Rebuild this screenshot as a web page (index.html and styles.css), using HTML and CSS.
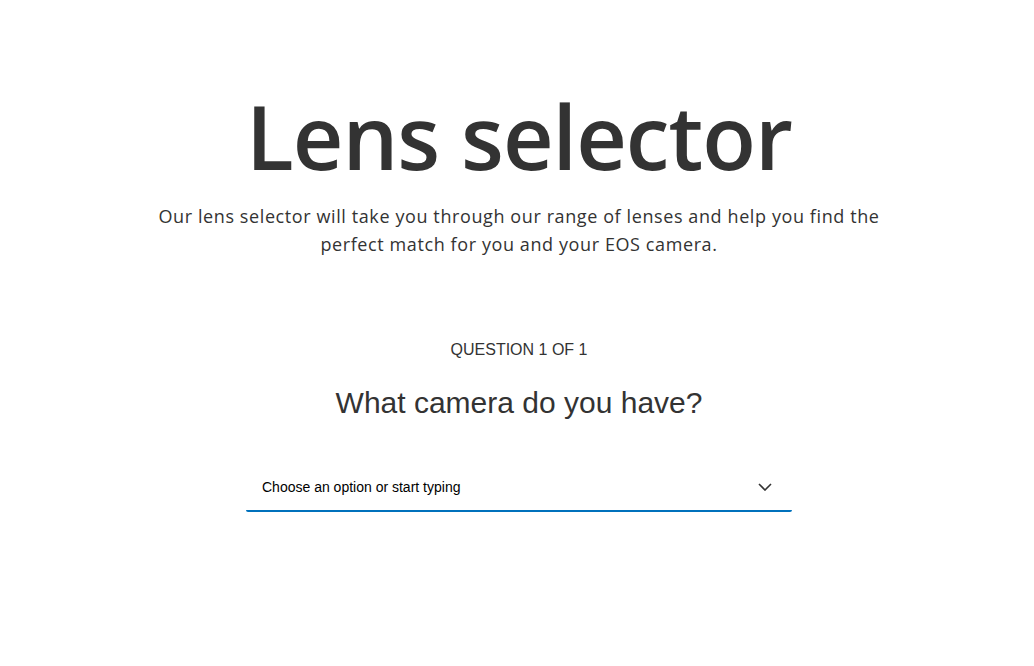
FILE: index.html
```html
<!DOCTYPE html>
<html lang="en">
<head>
<meta charset="utf-8">
<title>Lens selector</title>
<link rel="stylesheet" href="styles.css">
</head>
<body>
<main class="page">
  <header class="hero">
    <h1 class="title">Lens selector</h1>
    <p class="intro">Our lens selector will take you through our range of lenses and help you find the perfect match for you and your EOS camera.</p>
  </header>
  <section class="question">
    <div class="counter">QUESTION 1 OF 1</div>
    <h2 class="prompt">What camera do you have?</h2>
    <div class="select">
      <span class="placeholder">Choose an option or start typing</span>
      <svg class="chevron" width="14" height="8" viewBox="0 0 14 8"><path d="M1 1l6 6 6-6" fill="none" stroke="#333" stroke-width="1.6"/></svg>
    </div>
  </section>
</main>
</body>
</html>
```
FILE: styles.css
```css
html, body { margin: 0; padding: 0; background: #fff; }
body { font-family: "Liberation Sans", Arial, sans-serif; color: #333; }
.page { display: flex; flex-direction: column; align-items: center; padding: 84px 0 0 4px; }
.hero { display: flex; flex-direction: column; align-items: center; }
.title {
  margin: 0;
  font-family: "Open Sans", sans-serif;
  font-weight: 600;
  font-size: 88px;
  line-height: 104px;
  letter-spacing: -1px;
  color: #333;
}
.intro {
  margin: 14px 0 0;
  width: 736px;
  text-align: center;
  font-family: "Open Sans", sans-serif;
  font-weight: 400;
  font-size: 18px;
  line-height: 28px;
  letter-spacing: 0.6px;
  color: #333;
}
.question { display: flex; flex-direction: column; align-items: center; margin-top: 82px; width: 546px; }
.counter { font-size: 16px; line-height: 20px; color: #333; }
.prompt { margin: 25px 0 0; font-weight: 400; font-size: 30px; line-height: 36px; color: #333; }
.select {
  margin-top: 43px;
  align-self: stretch;
  display: flex; align-items: center; justify-content: space-between;
  height: 46px;
  padding: 0 20px 0 16px;
  border-bottom: 2px solid #0071bc;
  border-radius: 0 0 2px 2px;
}
.placeholder { font-size: 14px; color: #000; }
.chevron { display: block; }
```
